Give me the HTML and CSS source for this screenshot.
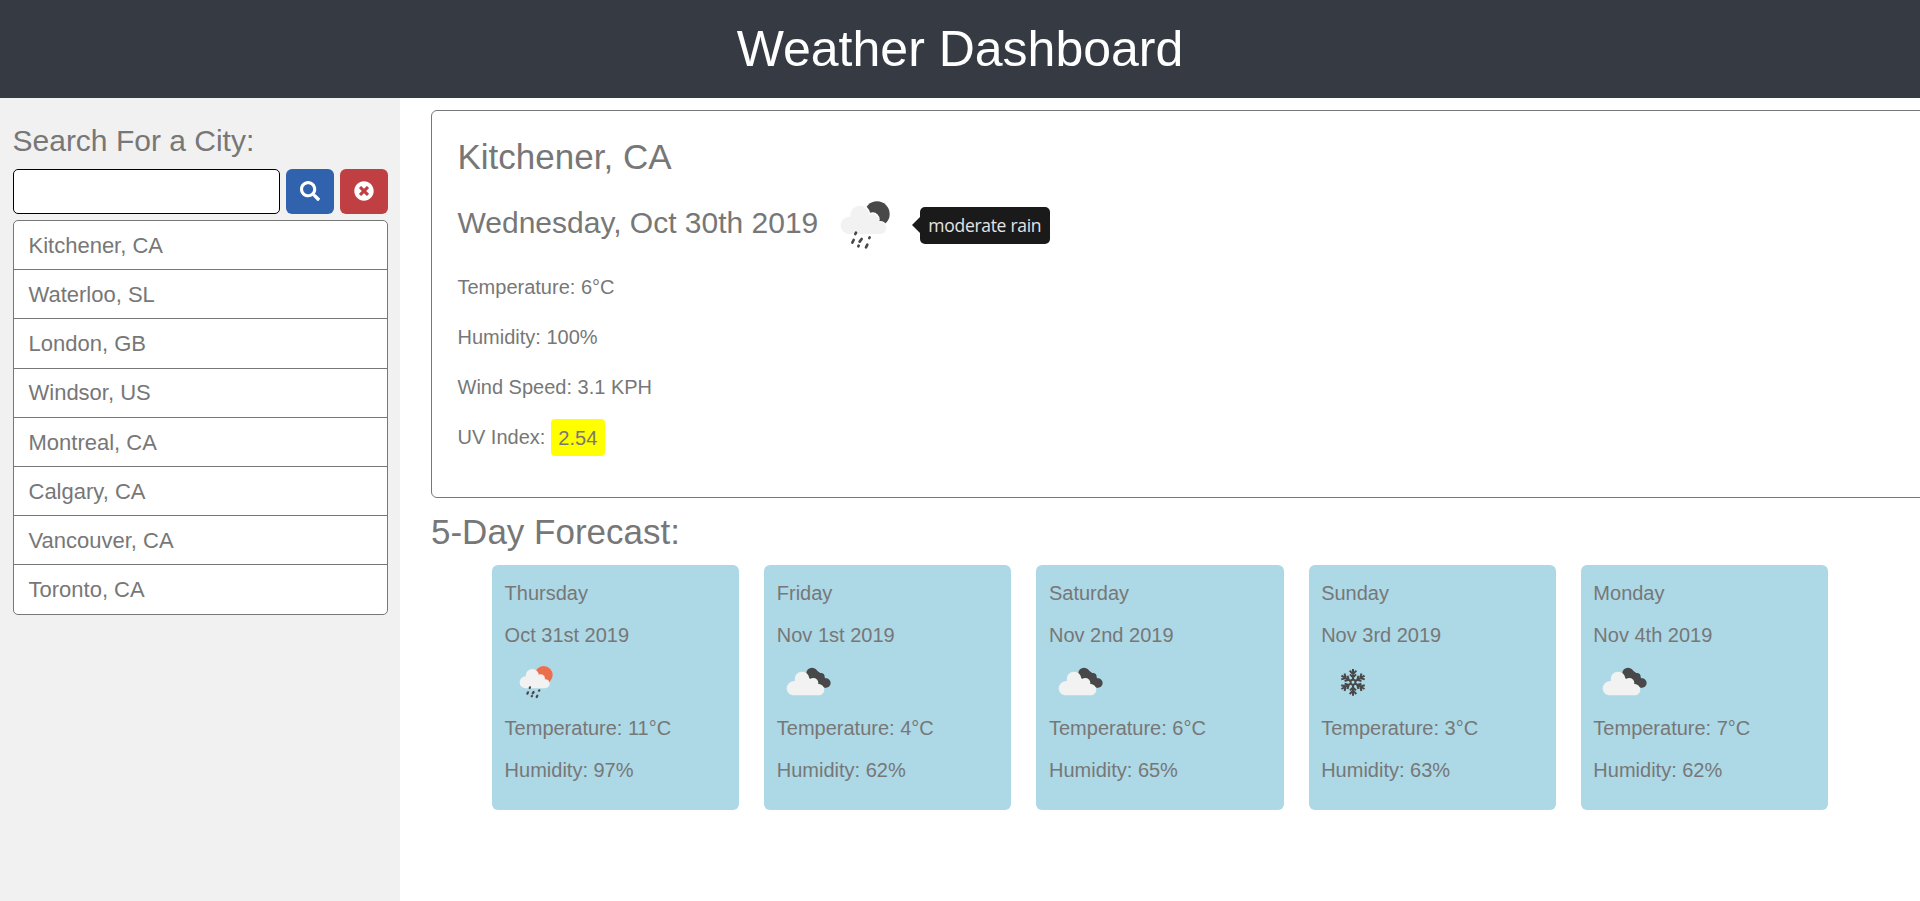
FILE: index.html
```html
<!DOCTYPE html>
<html lang="en">
<head>
<meta charset="utf-8">
<title>Weather Dashboard</title>
<link rel="stylesheet" href="styles.css">
</head>
<body>
<svg class="sprite" aria-hidden="true">
  <symbol id="clouds" viewBox="51 0 189 189">
    <g fill="#484849"><circle cx="156" cy="70" r="17"/><circle cx="182" cy="81" r="12"/><circle cx="198" cy="99" r="14"/><path d="M145 80L190 112L198 113L197 86L182 70L165 58Z"/></g>
    <g fill="#f2f2f2"><circle cx="101" cy="115" r="21"/><circle cx="126" cy="87" r="22"/><circle cx="160" cy="99" r="15"/><circle cx="176" cy="119" r="17"/><path d="M101 136H177V115L160 90L126 80L98 96Z"/></g>
  </symbol>
  <symbol id="snow" viewBox="34 0 189 189">
    <g fill="none" stroke="#484849" stroke-width="6">
      <path d="M130 88L137 92V101L130 105L123 101V92Z"/>
      <g id="arm"><path d="M130 88V57M120 62L130 72L140 62M121 73L130 82L139 73"/></g>
      <use href="#arm" transform="rotate(60 130 97)"/><use href="#arm" transform="rotate(120 130 97)"/><use href="#arm" transform="rotate(180 130 97)"/><use href="#arm" transform="rotate(240 130 97)"/><use href="#arm" transform="rotate(300 130 97)"/>
    </g>
  </symbol>
</svg>
<header class="header"><h1>Weather Dashboard</h1></header>
<div class="layout">
  <aside class="sidebar">
    <h3>Search For a City:</h3>
    <form class="search">
      <input class="search-input" type="text" aria-label="City">
      <button class="btn btn-search" type="button" aria-label="Search"><svg viewBox="0 0 512 512"><path fill="currentColor" d="M505 442.7L405.3 343c-4.500-4.500-10.600-7-17-7H372c27.600-35.300 44-79.700 44-128C416 93.100 322.900 0 208 0S0 93.100 0 208s93.100 208 208 208c48.300 0 92.700-16.400 128-44v16.300c0 6.400 2.500 12.500 7 17l99.700 99.700c9.400 9.400 24.600 9.400 33.900 0l28.300-28.300c9.400-9.400 9.400-24.600.1-34zM208 336c-70.700 0-128-57.200-128-128 0-70.700 57.200-128 128-128 70.700 0 128 57.200 128 128 0 70.700-57.200 128-128 128z"/></svg></button>
      <button class="btn btn-clear" type="button" aria-label="Clear"><svg viewBox="0 0 512 512"><path fill="currentColor" d="M256 8C119 8 8 119 8 256s111 248 248 248 248-111 248-248S393 8 256 8zm121.600 313.100c4.700 4.700 4.700 12.300 0 17L338 377.600c-4.700 4.700-12.300 4.700-17 0L256 312l-65.100 65.600c-4.700 4.700-12.300 4.700-17 0L134.400 338c-4.700-4.700-4.700-12.300 0-17l65.600-65-65.600-65.100c-4.700-4.700-4.700-12.300 0-17l39.600-39.600c4.700-4.700 12.300-4.700 17 0l65 65.700 65.100-65.600c4.700-4.700 12.300-4.700 17 0l39.600 39.600c4.700 4.700 4.700 12.300 0 17L312 256l65.600 65.100z"/></svg></button>
    </form>
    <ul class="cities">
      <li>Kitchener, CA</li><li>Waterloo, SL</li><li>London, GB</li><li>Windsor, US</li><li>Montreal, CA</li><li>Calgary, CA</li><li>Vancouver, CA</li><li>Toronto, CA</li>
    </ul>
  </aside>
  <main class="main">
    <section class="current">
      <h2>Kitchener, CA</h2>
      <div class="date-row">
        <h3>Wednesday, Oct 30th 2019</h3>
        <svg class="icon-now" viewBox="12 21 216 216">
          <circle cx="171" cy="102" r="38" fill="#484849"/>
          <g fill="#fff"><circle cx="119" cy="105" r="32"/><circle cx="158" cy="118" r="21"/><circle cx="181" cy="144" r="21"/></g>
          <g fill="#f2f2f2"><circle cx="88" cy="136" r="26"/><circle cx="119" cy="105" r="28"/><circle cx="158" cy="119" r="18"/><circle cx="180" cy="143" r="19"/><path d="M88 162H180L172 115L119 100L84 112Z"/></g>
          <path fill="none" stroke="#484849" stroke-width="8" stroke-linecap="round" d="M106 162L108 158M97 188L101 180M119 185L125 177M115 199L116 197M148 174L149 172M138 202L142 194"/>
        </svg>
        <span class="tooltip">moderate rain</span>
      </div>
      <p>Temperature: 6°C</p>
      <p>Humidity: 100%</p>
      <p>Wind Speed: 3.1 KPH</p>
      <p class="uv">UV Index: <span class="uv-badge">2.54</span></p>
    </section>
    <h2 class="forecast-title">5-Day Forecast:</h2>
    <section class="forecast">
      <article class="day"><p>Thursday</p><p>Oct 31st 2019</p>
        <svg class="icon-day" viewBox="75 0 189 189">
          <circle cx="191" cy="75" r="27" fill="#ec6e4c"/>
          <g fill="#f2f2f2"><circle cx="137" cy="97" r="18"/><circle cx="157" cy="77" r="20"/><circle cx="182" cy="86" r="13"/><circle cx="196" cy="101" r="13"/><path d="M137 115H196V98L182 80L157 70L134 82Z"/></g>
          <path fill="none" stroke="#484849" stroke-width="6.500" stroke-linecap="round" d="M149 114L150 112M142 131L144 127M158 130L161 126M155 139L156 138M177 122L178 121M170 141L172 137"/>
        </svg>
        <p>Temperature: 11°C</p><p>Humidity: 97%</p></article>
      <article class="day"><p>Friday</p><p>Nov 1st 2019</p><svg class="icon-day"><use href="#clouds"/></svg><p>Temperature: 4°C</p><p>Humidity: 62%</p></article>
      <article class="day"><p>Saturday</p><p>Nov 2nd 2019</p><svg class="icon-day"><use href="#clouds"/></svg><p>Temperature: 6°C</p><p>Humidity: 65%</p></article>
      <article class="day"><p>Sunday</p><p>Nov 3rd 2019</p><svg class="icon-day"><use href="#snow"/></svg><p>Temperature: 3°C</p><p>Humidity: 63%</p></article>
      <article class="day"><p>Monday</p><p>Nov 4th 2019</p><svg class="icon-day"><use href="#clouds"/></svg><p>Temperature: 7°C</p><p>Humidity: 62%</p></article>
    </section>
  </main>
</div>
</body>
</html>
```
FILE: styles.css
```css
* { box-sizing: border-box; }
html { overflow: hidden; }
body {
  display: flex;
  flex-direction: column;
  height: 100vh;
  margin: 0;
  overflow: hidden;
  background: #fff;
  color: #777;
  font: 20px/30px "Liberation Sans", Arial, sans-serif;
}
h1, h2, h3, p, ul { margin: 0; font-weight: 400; }
h2 { font-size: 35px; line-height: 42px; }
h3 { font-size: 30px; line-height: 36px; }
.sprite { display: none; }

.header { flex: none; height: 98px; padding-top: 19px; background: #363a42; color: #fff; text-align: center; }
.header h1 { font-size: 50px; line-height: 60px; }

.layout { display: flex; flex: 1; min-height: 0; }
.sidebar { flex: none; width: 400px; padding: 25px 12px 0 13px; background: #f1f1f1; }
.sidebar h3 { margin-left: -.5px; }
.search { display: flex; gap: 6px; margin: 10px 0 6px; }
.search-input { flex: 1; min-width: 0; height: 45px; border: 1px solid #000; border-radius: 5px; background: #fff; }
.btn { display: flex; align-items: center; justify-content: center; width: 48px; height: 45px; padding: 0 0 2px; border: 0; border-radius: 6px; color: #fff; }
.btn svg { width: 20px; height: 20px; }
.btn-search { background: #3162ad; }
.btn-clear { background: #bf3f42; }
.cities { padding: 0; list-style: none; border: 1px solid #777; border-radius: 5px; background: #fff; overflow: hidden; font-size: 22px; line-height: 33px; }
.cities li { height: 49.2px; padding: 7.800px 14.500px 0; border-bottom: 1px solid #777; }
.cities li:last-child { height: 48.6px; border-bottom: 0; }

.main { flex: 1; min-width: 0; padding: 12px 0 0 31px; }
.current { width: 1520px; height: 388px; padding: 25px 25.500px; border: 1px solid #777; border-radius: 6px; }
.date-row { display: flex; align-items: center; height: 72px; margin: 9px 0 13px; }
.icon-now { width: 72px; height: 72px; margin-left: 5.500px; }
.current p { margin-bottom: 20px; }
.tooltip { position: relative; width: 130px; height: 37px; margin: 4px 0 0 24px; border-radius: 5px; background: #1a1a1a; color: #e4e4e4; font: 17.500px/37px "Open Sans", "Noto Sans", sans-serif; text-align: center; letter-spacing: -.3px; }
.tooltip::before { content: ""; position: absolute; left: -8px; top: 10px; border: 8px solid transparent; border-left: 0; border-right-color: #1a1a1a; }
.uv { display: flex; gap: 5.500px; }
.uv-badge { height: 37px; margin-top: -3px; padding: 4px 7.500px 0; border-radius: 4px; background: #ff0; }

.forecast-title { margin: 13px 0 12px; }
.forecast { display: grid; grid-template-columns: repeat(5, 247.2px); gap: 25px; margin-left: 61px; }
.day { height: 245px; padding: 13px 12.600px; border-radius: 6px; background: #add8e6; }
.day p + p { margin-top: 12px; }
.icon-day { display: block; width: 63px; height: 63px; }
```
